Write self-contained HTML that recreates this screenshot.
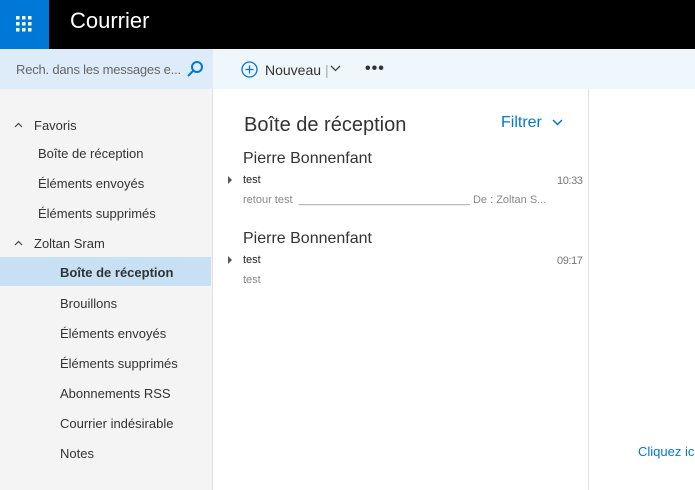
<!DOCTYPE html>
<html><head><meta charset="utf-8"><style>
*{margin:0;padding:0;box-sizing:border-box}
body{width:695px;height:490px;overflow:hidden;font-family:"Liberation Sans",sans-serif;background:#fff;position:relative}
.a{position:absolute;white-space:nowrap}
</style></head><body>
<div class="a" style="left:0;top:0;width:695px;height:49px;background:#000"></div>
<div class="a" style="left:0;top:0;width:49px;height:49px;background:#0078d7"></div>
<svg class="a" style="left:15px;top:15px" width="18" height="18" viewBox="0 0 18 18" fill="#fff">
<rect x="1" y="1" width="3.5" height="3.5"/><rect x="7" y="1" width="3.5" height="3.5"/><rect x="13" y="1" width="3.5" height="3.5"/>
<rect x="1" y="7" width="3.5" height="3.5"/><rect x="7" y="7" width="3.5" height="3.5"/><rect x="13" y="7" width="3.5" height="3.5"/>
<rect x="1" y="13" width="3.5" height="3.5"/><rect x="7" y="13" width="3.5" height="3.5"/><rect x="13" y="13" width="3.5" height="3.5"/></svg>
<div class="a" style="left:70px;top:8px;font-size:22px;color:#fff">Courrier</div>
<div class="a" style="left:0;top:49px;width:213px;height:40px;background:#deecf9"></div>
<div class="a" style="left:213px;top:49px;width:482px;height:40px;background:#eff6fc"></div>
<div class="a" style="left:16px;top:62px;font-size:13px;color:#666;letter-spacing:-0.2px">Rech. dans les messages e...</div>
<svg class="a" style="left:186px;top:60px" width="18" height="18" viewBox="0 0 18 18" fill="none" stroke="#0078d7" stroke-width="2"><circle cx="11" cy="7" r="5"/><line x1="7.5" y1="10.5" x2="2" y2="16"/></svg>
<svg class="a" style="left:241px;top:61px" width="17" height="17" viewBox="0 0 17 17" fill="none" stroke="#0078d7" stroke-width="1.3"><circle cx="8.5" cy="8.5" r="7.5"/><path d="M8.5 4.5v8M4.5 8.5h8"/></svg>
<div class="a" style="left:265px;top:62px;font-size:14px;color:#333">Nouveau <span style="color:#aaa">|</span></div>
<svg class="a" style="left:330px;top:65px" width="11" height="8" viewBox="0 0 11 8" fill="none" stroke="#444" stroke-width="1.3"><path d="M1 1l4.5 4.5L10 1"/></svg>
<div class="a" style="left:365px;top:60px;font-size:16px;color:#333;font-weight:bold;letter-spacing:1px">•••</div>
<div class="a" style="left:0;top:89px;width:213px;height:401px;background:#f4f4f4;border-right:1px solid #e1e1e1"></div>
<div class="a" style="left:0;top:257px;width:211px;height:29px;background:#c7e0f4"></div>
<svg class="a" style="left:14px;top:122px" width="9" height="6" viewBox="0 0 9 6" fill="none" stroke="#444" stroke-width="1.2"><path d="M1 5l3.5-3.5L8 5"/></svg>
<svg class="a" style="left:14px;top:240px" width="9" height="6" viewBox="0 0 9 6" fill="none" stroke="#444" stroke-width="1.2"><path d="M1 5l3.5-3.5L8 5"/></svg>
<div style="font-size:13px;color:#333">
<div class="a" style="left:34px;top:118px">Favoris</div>
<div class="a" style="left:38px;top:146px">Boîte de réception</div>
<div class="a" style="left:38px;top:176px">Éléments envoyés</div>
<div class="a" style="left:38px;top:206px">Éléments supprimés</div>
<div class="a" style="left:34px;top:236px">Zoltan Sram</div>
<div class="a" style="left:60px;top:265px;font-weight:bold">Boîte de réception</div>
<div class="a" style="left:60px;top:296px">Brouillons</div>
<div class="a" style="left:60px;top:326px">Éléments envoyés</div>
<div class="a" style="left:60px;top:356px">Éléments supprimés</div>
<div class="a" style="left:60px;top:386px">Abonnements RSS</div>
<div class="a" style="left:60px;top:416px">Courrier indésirable</div>
<div class="a" style="left:60px;top:446px">Notes</div>
</div>
<div class="a" style="left:588px;top:89px;width:1px;height:401px;background:#e1e1e1"></div>
<div class="a" style="left:244px;top:114px;font-size:20px;color:#333">Boîte de réception</div>
<div class="a" style="left:501px;top:114px;font-size:16px;color:#0078d7">Filtrer</div>
<svg class="a" style="left:552px;top:119px" width="11" height="8" viewBox="0 0 11 8" fill="none" stroke="#0078d7" stroke-width="1.5"><path d="M1 1l4.5 4.5L10 1"/></svg>
<div class="a" style="left:243px;top:150px;font-size:16px;color:#333">Pierre Bonnenfant</div>
<div class="a" style="left:228px;top:176px;width:0;height:0;border-left:4px solid #555;border-top:4px solid transparent;border-bottom:4px solid transparent"></div>
<div class="a" style="left:243px;top:174px;font-size:11px;color:#222">test</div>
<div class="a" style="left:557px;top:175px;font-size:11px;color:#777;letter-spacing:-0.4px">10:33</div>
<div class="a" style="left:243px;top:194px;font-size:11px;color:#888">retour test &nbsp;____________________________ De : Zoltan S...</div>
<div class="a" style="left:243px;top:230px;font-size:16px;color:#333">Pierre Bonnenfant</div>
<div class="a" style="left:228px;top:256px;width:0;height:0;border-left:4px solid #555;border-top:4px solid transparent;border-bottom:4px solid transparent"></div>
<div class="a" style="left:243px;top:254px;font-size:11px;color:#222">test</div>
<div class="a" style="left:557px;top:255px;font-size:11px;color:#777;letter-spacing:-0.4px">09:17</div>
<div class="a" style="left:243px;top:274px;font-size:11px;color:#888">test</div>
<div class="a" style="left:638px;top:444px;font-size:13px;color:#0078d7">Cliquez ici</div>
</body></html>
